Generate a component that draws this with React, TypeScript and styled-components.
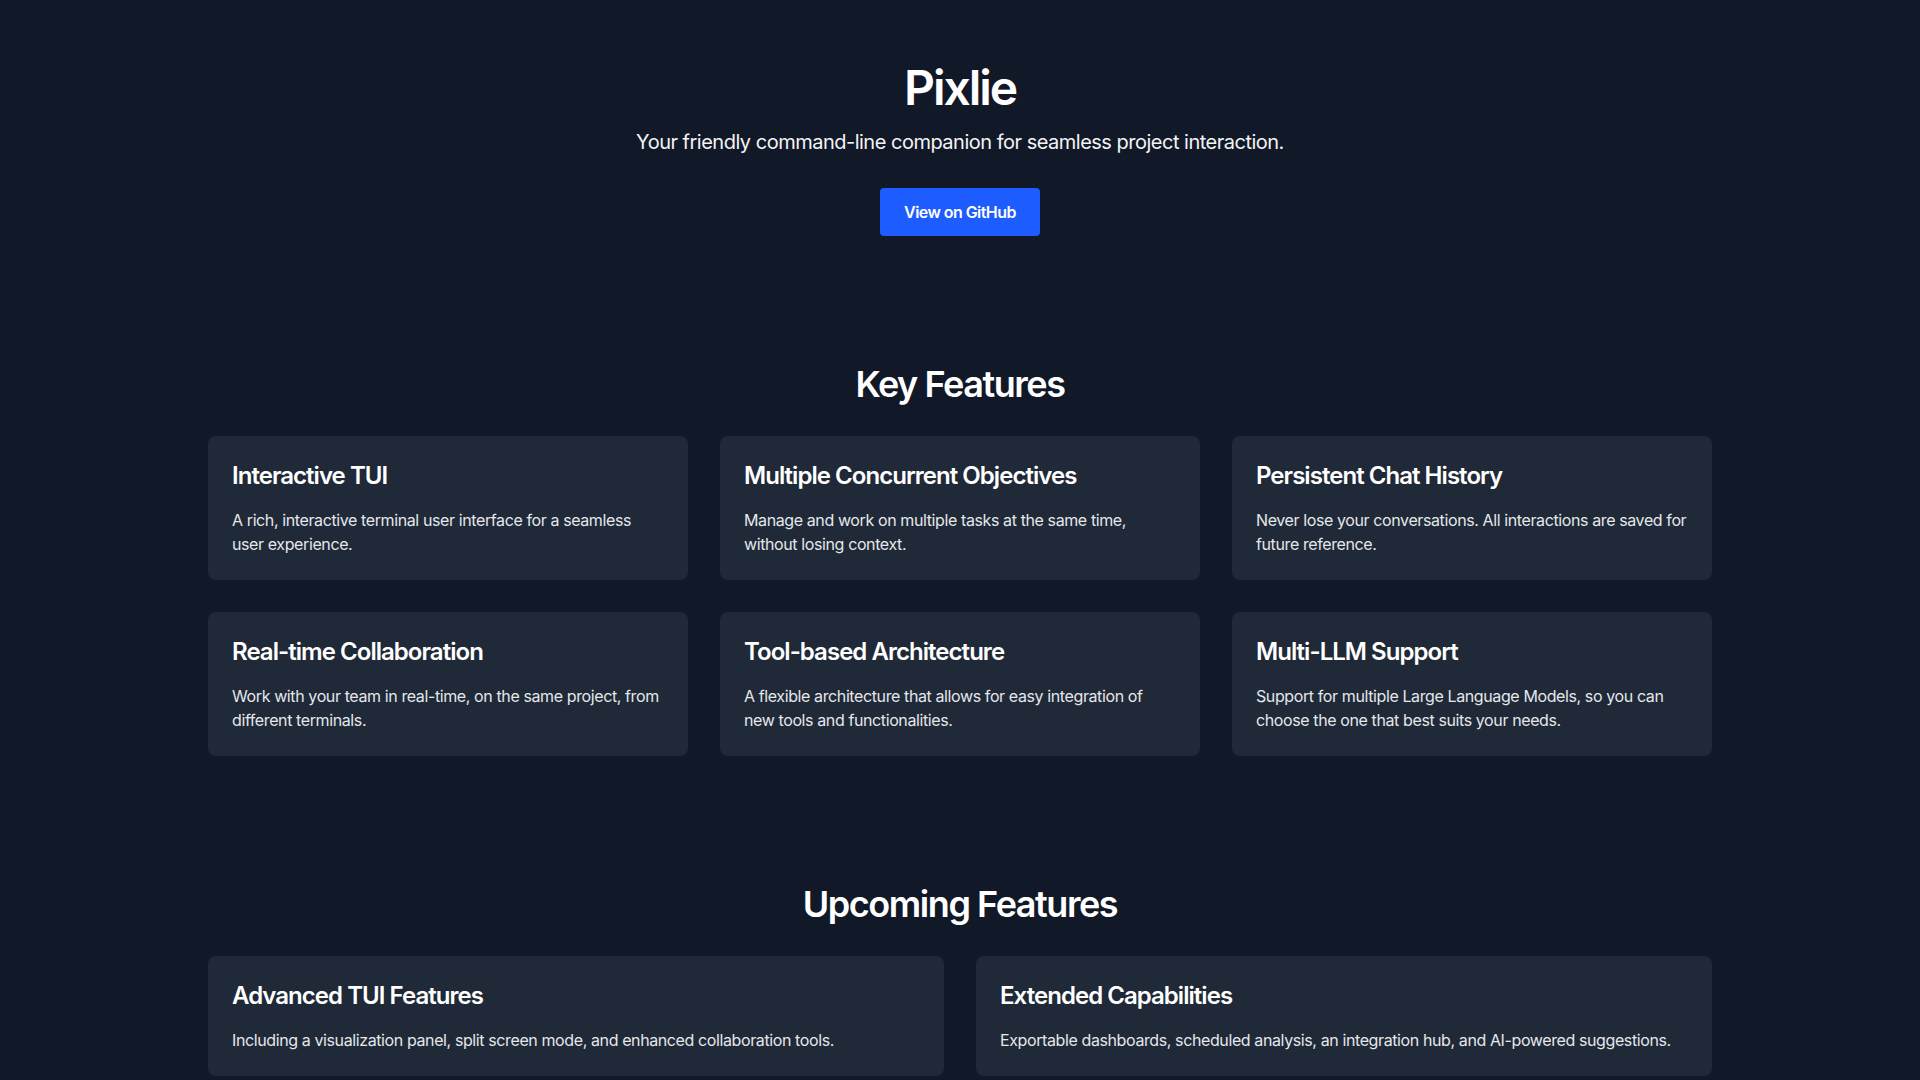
import React from 'react'
import styled, { createGlobalStyle } from 'styled-components'

const GlobalStyle = createGlobalStyle`
    * {
        box-sizing: border-box;
    }
    body {
        margin: 0;
        background-color: #111827;
        color: #ffffff;
        font-family: Inter, "Liberation Sans", Arial, sans-serif;
    }
`

const SPage = styled.main`
    min-height: 100vh;
    background-color: #111827;
`

const SContainer = styled.div`
    max-width: 1536px;
    margin: 0 auto;
    padding: 0 16px;
`

const SHero = styled.header`
    padding: 64px 0;
    text-align: center;
`

const STitle = styled.h1`
    margin: 0 0 16px;
    font-size: 48px;
    line-height: 48px;
    font-weight: 600;
    letter-spacing: -0.043em;
`

const SSubtitle = styled.p`
    margin: 0;
    font-size: 20px;
    line-height: 28px;
    color: #f3f4f6;
    letter-spacing: -0.025em;
`

const SButton = styled.a`
    display: inline-block;
    margin-top: 32px;
    padding: 12px 24px;
    line-height: 24px;
    font-size: 16px;
    font-weight: 600;
    color: #ffffff;
    background-color: #1d5cff;
    border-radius: 4px;
    text-decoration: none;
    letter-spacing: -0.035em;
`

const SSection = styled.section`
    padding: 64px 0;
`

const SHeading = styled.h2`
    margin: 0 0 32px;
    text-align: center;
    font-size: 36px;
    line-height: 40px;
    font-weight: 600;
    letter-spacing: -0.04em;
`

const SGrid = styled.div<{ $cols: number }>`
    display: grid;
    grid-template-columns: repeat(${props => props.$cols}, 1fr);
    gap: 32px;
`

const SCard = styled.div`
    background-color: #1f2937;
    border-radius: 8px;
    padding: 24px;
`

const SCardTitle = styled.h3`
    margin: 0 0 16px;
    font-size: 24px;
    line-height: 32px;
    font-weight: 600;
    letter-spacing: -0.04em;
`

const SCardText = styled.p`
    margin: 0;
    font-size: 16px;
    line-height: 24px;
    color: #e5e7eb;
    letter-spacing: -0.0245em;
`

const keyFeatures = [
    { title: 'Interactive TUI', text: 'A rich, interactive terminal user interface for a seamless user experience.' },
    { title: 'Multiple Concurrent Objectives', text: 'Manage and work on multiple tasks at the same time, without losing context.' },
    { title: 'Persistent Chat History', text: 'Never lose your conversations. All interactions are saved for future reference.' },
    { title: 'Real-time Collaboration', text: 'Work with your team in real-time, on the same project, from different terminals.' },
    { title: 'Tool-based Architecture', text: 'A flexible architecture that allows for easy integration of new tools and functionalities.' },
    { title: 'Multi-LLM Support', text: 'Support for multiple Large Language Models, so you can choose the one that best suits your needs.' },
]

const upcoming = [
    { title: 'Advanced TUI Features', text: 'Including a visualization panel, split screen mode, and enhanced collaboration tools.' },
    { title: 'Extended Capabilities', text: 'Exportable dashboards, scheduled analysis, an integration hub, and AI-powered suggestions.' },
]

const App = () => {
    return (
        <SPage>
            <GlobalStyle />
            <SContainer>
                <SHero>
                    <STitle>Pixlie</STitle>
                    <SSubtitle>Your friendly command-line companion for seamless project interaction.</SSubtitle>
                    <SButton href="#">View on GitHub</SButton>
                </SHero>

                <SSection>
                    <SHeading>Key Features</SHeading>
                    <SGrid $cols={3}>
                        {keyFeatures.map(f => (
                            <SCard key={f.title}>
                                <SCardTitle>{f.title}</SCardTitle>
                                <SCardText>{f.text}</SCardText>
                            </SCard>
                        ))}
                    </SGrid>
                </SSection>

                <SSection>
                    <SHeading>Upcoming Features</SHeading>
                    <SGrid $cols={2}>
                        {upcoming.map(f => (
                            <SCard key={f.title}>
                                <SCardTitle>{f.title}</SCardTitle>
                                <SCardText>{f.text}</SCardText>
                            </SCard>
                        ))}
                    </SGrid>
                </SSection>
            </SContainer>
        </SPage>
    )
}

export default App
